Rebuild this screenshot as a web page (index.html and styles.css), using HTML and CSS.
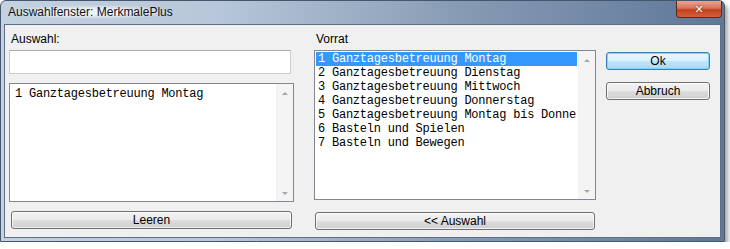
FILE: index.html
```html
<!DOCTYPE html>
<html lang="de">
<head>
  <meta charset="UTF-8" />
  <title>Auswahlfenster: MerkmalePlus</title>
  <link rel="stylesheet" href="styles.css">
</head>
<body>
  <div class="window">
    <div class="title-bar">
      <span class="title-text">Auswahlfenster: MerkmalePlus</span>
      <button class="close-btn" type="button">&#x2715;</button>
    </div>
    <div class="client">
      <div class="col col-left">
        <label class="caption" for="auswahl">Auswahl:</label>
        <input class="textbox" type="text" id="auswahl">
        <div class="listbox listbox-left">
          <div class="list-items">
            <div class="item">1 Ganztagesbetreuung Montag</div>
          </div>
          <div class="scrollbar">
            <span class="arrow arrow-up"></span>
            <span class="arrow arrow-down"></span>
          </div>
        </div>
        <button class="btn btn-wide btn-leeren" type="button">Leeren</button>
      </div>

      <div class="col col-mid">
        <div class="caption">Vorrat</div>
        <div class="listbox listbox-mid">
          <div class="list-items">
            <div class="item selected">1 Ganztagesbetreuung Montag</div>
            <div class="item">2 Ganztagesbetreuung Dienstag</div>
            <div class="item">3 Ganztagesbetreuung Mittwoch</div>
            <div class="item">4 Ganztagesbetreuung Donnerstag</div>
            <div class="item">5 Ganztagesbetreuung Montag bis Donnerstag</div>
            <div class="item">6 Basteln und Spielen</div>
            <div class="item">7 Basteln und Bewegen</div>
          </div>
          <div class="scrollbar">
            <span class="arrow arrow-up"></span>
            <span class="arrow arrow-down"></span>
          </div>
        </div>
        <button class="btn btn-wide btn-auswahl" type="button">&lt;&lt; Auswahl</button>
      </div>

      <div class="col col-right">
        <button class="btn btn-default" type="button">Ok</button>
        <button class="btn btn-abbruch" type="button">Abbruch</button>
      </div>
    </div>
  </div>
</body>
</html>
```

FILE: styles.css
```css
* {
  box-sizing: border-box;
}

body {
  margin: 0;
  background: #ffffff;
  font-family: "Liberation Sans", Arial, sans-serif;
  font-size: 12px;
  color: #000;
}

.window {
  width: 725px;
  height: 242px;
  background: linear-gradient(to right, #c3d1e0 0%, #b7c7d9 30%, #8599b3 65%, #5f7899 100%);
  border: 1px solid #45566d;
  border-radius: 6px 6px 0 0;
  box-shadow: 3px 4px 4px rgba(0, 0, 0, 0.35);
  padding: 0 3px 3px 3px;
  display: flex;
  flex-direction: column;
}

.title-bar {
  height: 23px;
  display: flex;
  align-items: flex-start;
  justify-content: space-between;
}

.title-text {
  margin-top: 4px;
  margin-left: 1px;
  padding: 0 3px;
  font-size: 12px;
  color: #111;
  background: radial-gradient(ellipse at center, rgba(255, 255, 255, 0.75) 30%, rgba(255, 255, 255, 0) 72%);
}

.close-btn {
  width: 46px;
  height: 17px;
  margin-right: -1px;
  border: 1px solid #5a2a20;
  border-top: none;
  border-radius: 0 0 4px 4px;
  background: linear-gradient(to bottom, #e7a593 0%, #d6735a 45%, #c2401f 55%, #d4613c 100%);
  color: #fff;
  font-family: "DejaVu Sans", sans-serif;
  font-size: 11px;
  font-weight: bold;
  line-height: 15px;
  padding: 0;
  text-shadow: 0 0 2px #5a1a0a;
}

.client {
  flex: 1;
  background: #f0f0f0;
  border: 1px solid #5e6f85;
  display: flex;
  padding: 6px 0 0 4px;
}

.col {
  display: flex;
  flex-direction: column;
}

.col-left {
  width: 285px;
}

.col-mid {
  width: 282px;
  margin-left: 20px;
}

.col-right {
  width: 104px;
  margin-left: 10px;
  padding-top: 21px;
}

.caption {
  height: 19px;
  padding-left: 2px;
  padding-top: 1px;
  line-height: 14px;
}

.textbox {
  width: 282px;
  height: 24px;
  border: 1px solid #c9cdd4;
  border-top-color: #abadb3;
  background: #fff;
  margin: 0;
}

.listbox {
  display: flex;
  background: #fff;
  border: 1px solid #828790;
}

.listbox-left {
  margin-top: 9px;
  height: 119px;
}

.listbox-mid {
  height: 150px;
}

.list-items {
  flex: 1;
  padding: 1px 1px;
  overflow: hidden;
  font-family: "Liberation Mono", "Courier New", monospace;
  font-size: 12px;
  letter-spacing: -0.23px;
}

.listbox-left .list-items {
  padding: 3px 3px;
}

.item {
  height: 14px;
  line-height: 14px;
  padding-left: 2px;
  white-space: nowrap;
  overflow: hidden;
}

.item.selected {
  background: #3399ff;
  color: #fff;
}

.scrollbar {
  width: 17px;
  background: #f4f4f4;
  border-left: 1px solid #f0f0f0;
  display: flex;
  flex-direction: column;
  justify-content: space-between;
  align-items: center;
  padding: 8px 0 6px 0;
}

.arrow {
  width: 0;
  height: 0;
  border-left: 3px solid transparent;
  border-right: 3px solid transparent;
}

.arrow-up {
  border-bottom: 3px solid #a8a8a8;
}

.arrow-down {
  border-top: 3px solid #a8a8a8;
}

.btn {
  font-family: "Liberation Sans", Arial, sans-serif;
  font-size: 12px;
  color: #000;
  height: 18px;
  padding: 0;
  line-height: 15px;
  border: 1px solid #707070;
  border-radius: 3px;
  background: linear-gradient(to bottom, #f2f2f2 0%, #ebebeb 48%, #dddddd 52%, #cfcfcf 100%);
  box-shadow: inset 0 0 0 1px rgba(255, 255, 255, 0.7);
}

.btn-wide {
  width: 282px;
}

.btn-leeren {
  margin-top: 9px;
  margin-left: 2px;
  width: 281px;
}

.btn-auswahl {
  margin-top: 12px;
  margin-left: 1px;
  width: 280px;
}

.btn-default {
  height: 18px;
  border-color: #3c7fb1;
  background: linear-gradient(to bottom, #eaf6fd 0%, #d9f0fc 48%, #bee6fd 52%, #a7d9f5 100%);
  box-shadow: inset 0 0 0 1px #7fd4f7;
}

.btn-abbruch {
  margin-top: 12px;
}
```
